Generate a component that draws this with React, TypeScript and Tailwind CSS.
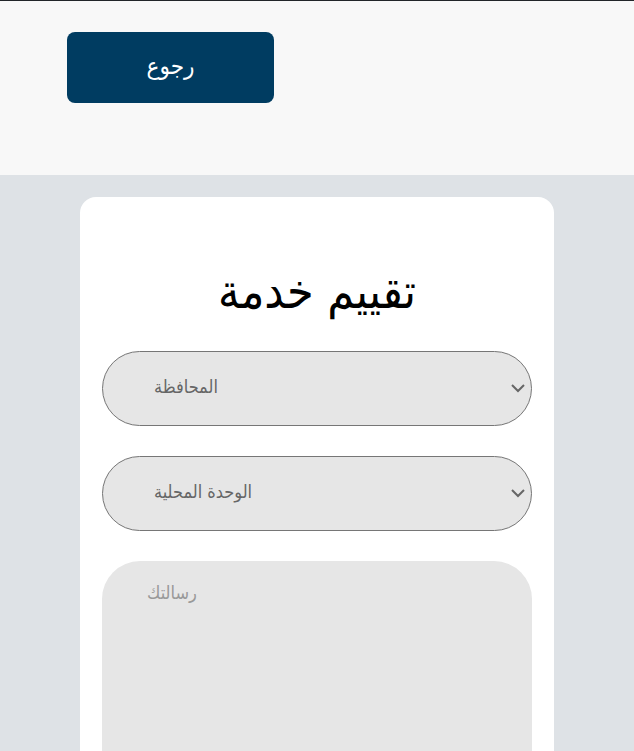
function Chevron() {
  return (
    <svg aria-hidden="true" viewBox="0 0 14 9" className="pointer-events-none absolute right-[7px] top-[33px] h-[9px] w-[14px]" fill="none" stroke="#666666" strokeWidth="2">
      <path d="M1 1l6 6 6-6" />
    </svg>
  );
}

function SelectField({ label }: { label: string }) {
  return (
    <div className="relative mb-[30px]">
      <select aria-label={label} className="block h-[75px] w-full appearance-none rounded-full border border-[#767676] bg-[#e6e6e6] pb-1 pl-[51px] pr-8 text-lg text-[#666666]">
        <option>{label}</option>
      </select>
      <Chevron />
    </div>
  );
}

export default function App() {
  return (
    <div lang="ar" className="h-screen overflow-hidden bg-[#dee2e6] font-['DejaVu_Sans_Condensed','DejaVu_Sans',sans-serif]">
      <header className="h-[175px] border-t border-[#212529] bg-[#f8f8f8] px-[67px] pt-[31px]">
        <button type="button" className="h-[71px] w-[207px] rounded-lg bg-[#003c61] pb-1 text-2xl text-white">رجوع</button>
      </header>
      <main className="px-20 pt-[22px]">
        <form className="rounded-2xl bg-white px-[22px] pt-16">
          <h1 className="h-[90px] text-center text-5xl leading-[60px] text-black">تقييم خدمة</h1>
          <SelectField label="المحافظة" />
          <SelectField label="الوحدة المحلية" />
          <textarea aria-label="رسالتك" placeholder="رسالتك" className="block h-[300px] w-full resize-none rounded-[38px] bg-[#e6e6e6] px-[45px] py-[18px] text-lg text-[#666666] placeholder:text-[#999999]" />
        </form>
      </main>
    </div>
  );
}
